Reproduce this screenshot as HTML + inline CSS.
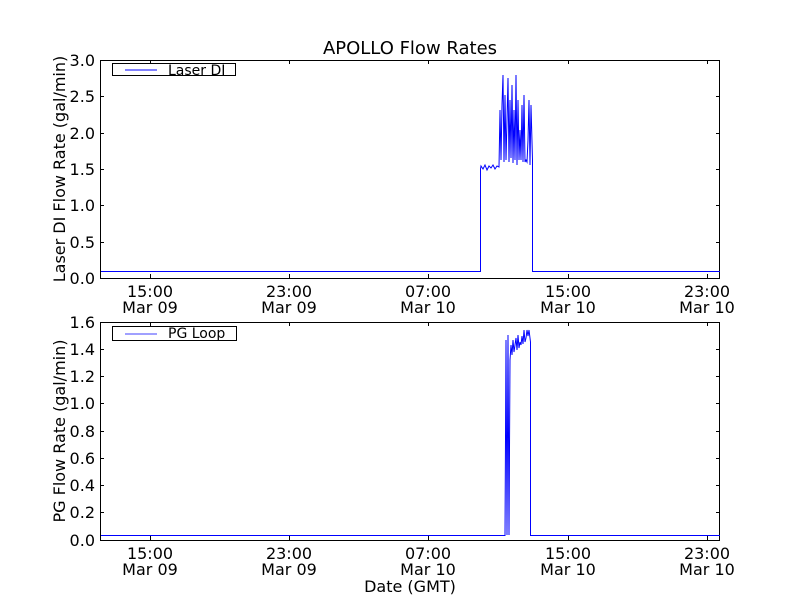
<!DOCTYPE html>
<html><head><style>body{margin:0;background:#fff}svg{display:block}text{font-family:"DejaVu Sans","Liberation Sans",sans-serif;fill:#000}</style></head><body>
<svg width="800" height="600" viewBox="0 0 800 600">
<rect width="800" height="600" fill="#fff"/>
<text x="410" y="54" font-size="18" text-anchor="middle">APOLLO Flow Rates</text>
<g stroke="#000" stroke-width="1" fill="none">
<rect x="100.5" y="60.5" width="619" height="218"/>
<path d="M100 96.5h4M100 133.5h4M100 169.5h4M100 205.5h4M100 242.5h4M720 96.5h-4M720 133.5h-4M720 169.5h-4M720 205.5h-4M720 242.5h-4
M150.5 278v-4M289.5 278v-4M428.5 278v-4M568.5 278v-4M707.5 278v-4M150.5 60v4M289.5 60v4M428.5 60v4M568.5 60v4M707.5 60v4"/>
<rect x="100.5" y="322.5" width="619" height="218"/>
<path d="M100 349.5h4M100 376.5h4M100 403.5h4M100 431.5h4M100 458.5h4M100 485.5h4M100 512.5h4M720 349.5h-4M720 376.5h-4M720 403.5h-4M720 431.5h-4M720 458.5h-4M720 485.5h-4M720 512.5h-4
M150.5 540v-4M289.5 540v-4M428.5 540v-4M568.5 540v-4M707.5 540v-4M150.5 322v4M289.5 322v4M428.5 322v4M568.5 322v4M707.5 322v4"/>
</g>
<g font-size="16" text-anchor="end">
<text x="95" y="66">3.0</text><text x="95" y="102">2.5</text><text x="95" y="139">2.0</text><text x="95" y="175">1.5</text><text x="95" y="211">1.0</text><text x="95" y="248">0.5</text><text x="95" y="284">0.0</text>
<text x="95" y="328">1.6</text><text x="95" y="355">1.4</text><text x="95" y="382">1.2</text><text x="95" y="409">1.0</text><text x="95" y="437">0.8</text><text x="95" y="464">0.6</text><text x="95" y="491">0.4</text><text x="95" y="518">0.2</text><text x="95" y="546">0.0</text>
</g>
<g font-size="16" text-anchor="middle">
<text x="150" y="297">15:00</text><text x="150" y="313">Mar 09</text>
<text x="289" y="297">23:00</text><text x="289" y="313">Mar 09</text>
<text x="428" y="297">07:00</text><text x="428" y="313">Mar 10</text>
<text x="568" y="297">15:00</text><text x="568" y="313">Mar 10</text>
<text x="707" y="297">23:00</text><text x="707" y="313">Mar 10</text>
<text x="150" y="559">15:00</text><text x="150" y="575">Mar 09</text>
<text x="289" y="559">23:00</text><text x="289" y="575">Mar 09</text>
<text x="428" y="559">07:00</text><text x="428" y="575">Mar 10</text>
<text x="568" y="559">15:00</text><text x="568" y="575">Mar 10</text>
<text x="707" y="559">23:00</text><text x="707" y="575">Mar 10</text>
<text x="410" y="592">Date (GMT)</text>
<text transform="translate(65,169) rotate(-90)">Laser DI Flow Rate (gal/min)</text>
<text transform="translate(65,431) rotate(-90)">PG Flow Rate (gal/min)</text>
</g>
<g stroke="#0000ff" stroke-width="1" fill="none">
<path d="M101 271.5H480.5V169L481 166 483 169 485 165 487 170 489 166 491 168 493 165 495 169 497 166 499 167 500 110 501 160 502 105 503 75 504 162 505 95 506 160 507 120 508 78 509 162 510 100 511 158 512 85 513 163 514 110 515 160 516 75 517 165 518 100 519 160 520 130 521 160 522 105 523 162 524 95 525 162 526 160 527 162 528 140 529 100 530 165 531 105 532.5 160V271.5H720"/>
<path d="M101 535.5H505L506 340 507 535 508 335 509 535 510 360 511 345 512 355 513 340 514 352 515 345 516 338 517 350 518 335 519 348 520 342 521 345 522 336 523 344 524 330 525 342 526 338 527 330 528 336 529 330 530.5 342V535.5H720"/>
</g>
<rect x="112.5" y="63.5" width="123" height="12" fill="#fff" stroke="#000"/>
<line x1="125" y1="70" x2="157" y2="70" stroke="#0000ff"/>
<text x="168" y="75" font-size="14">Laser DI</text>
<rect x="112.5" y="326.5" width="124" height="14" fill="#fff" stroke="#000"/>
<line x1="125" y1="334" x2="157" y2="334" stroke="#8080ff" stroke-width="1.5"/>
<text x="168" y="338" font-size="14">PG Loop</text>
</svg>
</body></html>
